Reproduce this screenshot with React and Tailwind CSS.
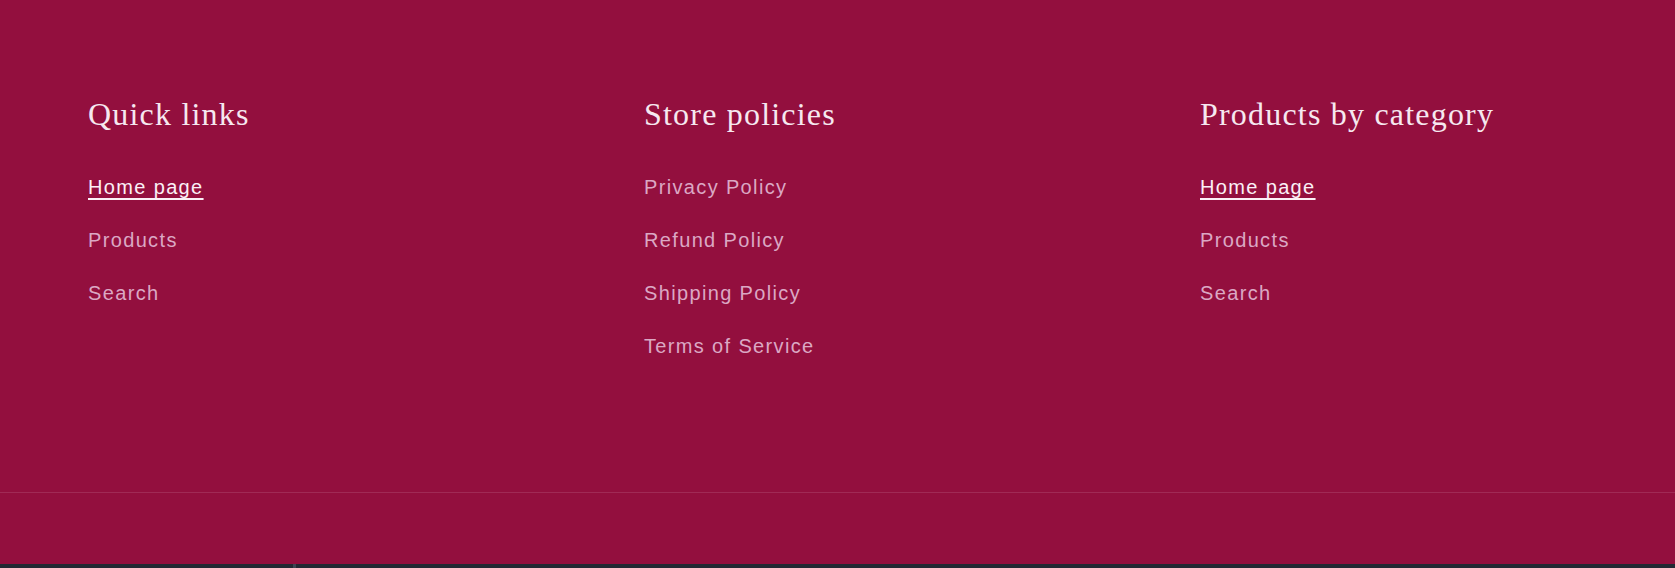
export default function App() {
  const cols = [
    { title: "Quick links", links: ["Home page", "Products", "Search"], active: 0 },
    { title: "Store policies", links: ["Privacy Policy", "Refund Policy", "Shipping Policy", "Terms of Service"], active: -1 },
    { title: "Products by category", links: ["Home page", "Products", "Search"], active: 0 },
  ];
  return (
    <div className="w-[1675px] h-[568px] bg-[#930f3e] flex flex-col overflow-hidden">
      <div className="h-[493px] pt-[98px] pl-[88px] grid grid-cols-[556px_556px_1fr] border-b border-[#a02a55]">
        {cols.map((c) => (
          <div key={c.title} className="flex flex-col">
            <h2 className="text-[32px] leading-none tracking-[1.2px] text-[#f6e8f0] font-['Liberation_Serif',serif]">
              {c.title}
            </h2>
            <ul className="mt-[47px] flex flex-col gap-[33px] font-['Liberation_Sans',Arial,sans-serif] text-[20px] leading-[20px] tracking-[1.35px]">
              {c.links.map((l, i) => (
                <li key={l}>
                  <a
                    href="#"
                    className={
                      i === c.active
                        ? "text-[#fbf0f6] underline decoration-[2px] underline-offset-[4px]"
                        : "text-[#dba8c4]"
                    }
                  >
                    {l}
                  </a>
                </li>
              ))}
            </ul>
          </div>
        ))}
      </div>
      <div className="flex-1" />
      <div className="h-[4px] bg-[#232833] flex">
        <div className="w-[293px]" />
        <div className="w-[3px] bg-[#3d4452]" />
      </div>
    </div>
  );
}
